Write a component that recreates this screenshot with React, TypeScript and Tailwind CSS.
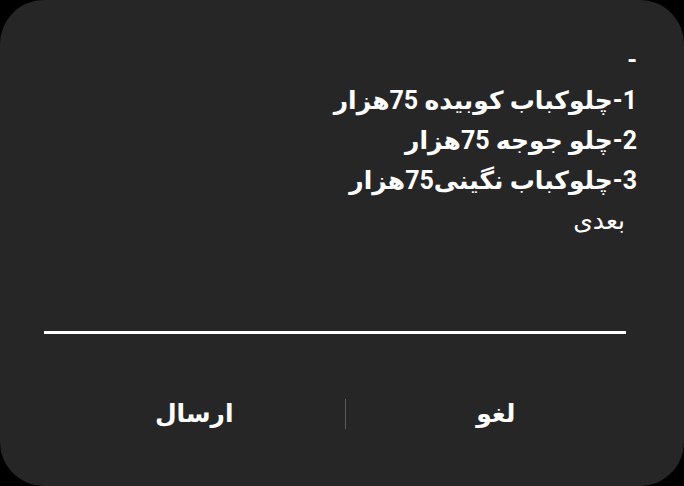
export default function App() {
  const lines = ['-', '1-چلوکباب کوبیده 75هزار', '2-چلو جوجه 75هزار', '3-چلوکباب نگینی75هزار']

  return (
    <main className="w-[684px] h-[486px] bg-black">
      <div
        className="w-full h-full bg-[#262626] rounded-[44px] flex flex-col"
        style={{ fontFamily: 'Roboto, "DejaVu Sans", sans-serif' }}
      >
        {/* Message body */}
        <div dir="rtl" className="pt-[41px] pr-[47px] text-white text-[25px] leading-[40px]">
          {lines.map((line, i) => (
            <div key={i} className="font-bold">{line}</div>
          ))}
          <div className="pr-[12px] font-medium">بعدی</div>
        </div>

        {/* Input underline */}
        <div className="mt-[90px] ml-[44px] mr-[58px] h-[3px] bg-white" />

        {/* Actions */}
        <div dir="rtl" className="mt-[61px] mr-[38px] ml-[44px] flex items-center text-white text-[25px] font-bold">
          <button className="flex-1 text-center">لغو</button>
          <span className="w-px h-[30px] bg-[#5a5a5a]" />
          <button className="flex-1 text-center">ارسال</button>
        </div>
      </div>
    </main>
  )
}
